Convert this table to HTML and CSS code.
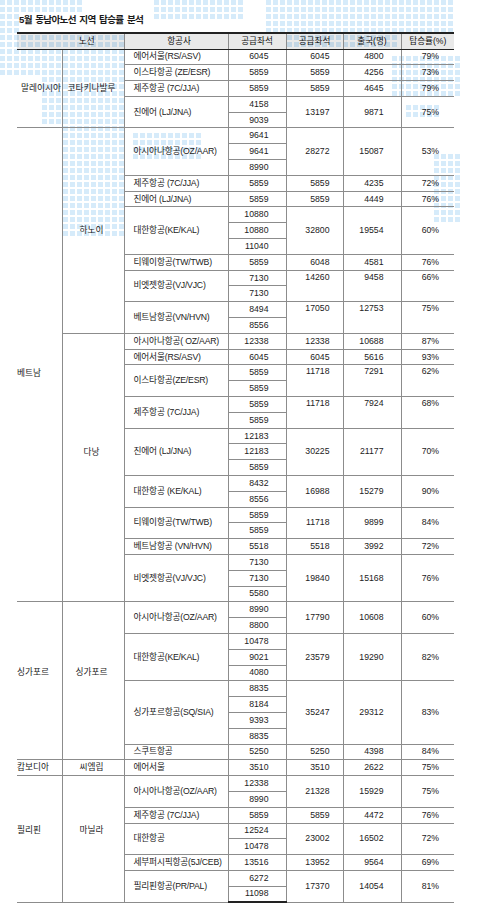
FILE: index.html
```html
<!DOCTYPE html>
<html lang="ko">
<head>
<meta charset="utf-8">
<title>5월 동남아노선 지역 탑승률 분석</title>
<link rel="stylesheet" href="styles.css">
</head>
<body>
<div class="page">
  <svg class="map" width="484" height="260" viewBox="0 0 484 260" aria-hidden="true">
    <defs>
      <pattern id="dots" width="7" height="7" patternUnits="userSpaceOnUse">
        <rect width="5" height="5" fill="#d6ebfa"/>
      </pattern>
    </defs>
    <g fill="url(#dots)">
      <rect x="0" y="0" width="84" height="14"/>
      <rect x="154" y="0" width="91" height="21"/>
      <rect x="266" y="0" width="189" height="35"/>
      <rect x="0" y="14" width="21" height="21"/>
      <rect x="0" y="35" width="126" height="42"/>
      <rect x="42" y="77" width="84" height="49"/>
      <rect x="63" y="126" width="63" height="112"/>
      <rect x="133" y="133" width="70" height="28"/>
      <rect x="287" y="35" width="112" height="14"/>
      <rect x="392" y="56" width="70" height="42"/>
      <rect x="406" y="105" width="35" height="14"/>
      <rect x="434" y="154" width="28" height="70"/>
    </g>
  </svg>

  <h1 class="title">5월 동남아노선 지역 탑승률 분석</h1>

  <table class="stats">
    <colgroup>
      <col class="c-country">
      <col class="c-city">
      <col class="c-air">
      <col class="c-sub">
      <col class="c-tot">
      <col class="c-out">
      <col class="c-rate">
    </colgroup>
    <thead>
      <tr>
        <th colspan="2" class="h-route">노선</th>
        <th class="h-air">항공사</th>
        <th>공급좌석</th>
        <th>공급좌석</th>
        <th>출국(명)</th>
        <th>탑승률(%)</th>
      </tr>
    </thead>
    <tbody>
      <!-- 말레이시아 -->
      <tr>
        <td rowspan="5" class="country country-my">말레이시아</td>
        <td rowspan="5" class="city">코타키나발루</td>
        <td class="nm">에어서울(RS/ASV)</td><td class="sub">6045</td><td class="tot">6045</td><td class="out">4800</td><td class="rate">79%</td>
      </tr>
      <tr><td class="nm">이스타항공 (ZE/ESR)</td><td class="sub">5859</td><td class="tot">5859</td><td class="out">4256</td><td class="rate">73%</td></tr>
      <tr><td class="nm">제주항공 (7C/JJA)</td><td class="sub">5859</td><td class="tot">5859</td><td class="out">4645</td><td class="rate">79%</td></tr>
      <tr><td rowspan="2" class="nm">진에어 (LJ/JNA)</td><td class="sub">4158</td><td rowspan="2" class="tot">13197</td><td rowspan="2" class="out">9871</td><td rowspan="2" class="rate">75%</td></tr>
      <tr><td class="sub">9039</td></tr>

      <!-- 베트남 / 하노이 -->
      <tr>
        <td rowspan="30" class="country country-vn">베트남</td>
        <td rowspan="13" class="city">하노이</td>
        <td rowspan="3" class="nm">아시아나항공(OZ/AAR)</td><td class="sub">9641</td><td rowspan="3" class="tot">28272</td><td rowspan="3" class="out">15087</td><td rowspan="3" class="rate">53%</td>
      </tr>
      <tr><td class="sub">9641</td></tr>
      <tr><td class="sub">8990</td></tr>
      <tr><td class="nm">제주항공 (7C/JJA)</td><td class="sub">5859</td><td class="tot">5859</td><td class="out">4235</td><td class="rate">72%</td></tr>
      <tr><td class="nm">진에어 (LJ/JNA)</td><td class="sub">5859</td><td class="tot">5859</td><td class="out">4449</td><td class="rate">76%</td></tr>
      <tr><td rowspan="3" class="nm">대한항공(KE/KAL)</td><td class="sub">10880</td><td rowspan="3" class="tot">32800</td><td rowspan="3" class="out">19554</td><td rowspan="3" class="rate">60%</td></tr>
      <tr><td class="sub">10880</td></tr>
      <tr><td class="sub">11040</td></tr>
      <tr><td class="nm">티웨이항공(TW/TWB)</td><td class="sub">5859</td><td class="tot">6048</td><td class="out">4581</td><td class="rate">76%</td></tr>
      <tr><td rowspan="2" class="nm">비엣젯항공(VJ/VJC)</td><td class="sub">7130</td><td rowspan="2" class="tot top">14260</td><td rowspan="2" class="out top">9458</td><td rowspan="2" class="rate top">66%</td></tr>
      <tr><td class="sub">7130</td></tr>
      <tr><td rowspan="2" class="nm">베트남항공(VN/HVN)</td><td class="sub">8494</td><td rowspan="2" class="tot top">17050</td><td rowspan="2" class="out top">12753</td><td rowspan="2" class="rate top">75%</td></tr>
      <tr><td class="sub">8556</td></tr>

      <!-- 베트남 / 다낭 -->
      <tr>
        <td rowspan="17" class="city city-dn">다낭</td>
        <td class="nm">아시아나항공( OZ/AAR)</td><td class="sub">12338</td><td class="tot">12338</td><td class="out">10688</td><td class="rate">87%</td>
      </tr>
      <tr><td class="nm">에어서울(RS/ASV)</td><td class="sub">6045</td><td class="tot">6045</td><td class="out">5616</td><td class="rate">93%</td></tr>
      <tr><td rowspan="2" class="nm">이스타항공(ZE/ESR)</td><td class="sub">5859</td><td rowspan="2" class="tot top">11718</td><td rowspan="2" class="out top">7291</td><td rowspan="2" class="rate top">62%</td></tr>
      <tr><td class="sub">5859</td></tr>
      <tr><td rowspan="2" class="nm">제주항공 (7C/JJA)</td><td class="sub">5859</td><td rowspan="2" class="tot top">11718</td><td rowspan="2" class="out top">7924</td><td rowspan="2" class="rate top">68%</td></tr>
      <tr><td class="sub">5859</td></tr>
      <tr><td rowspan="3" class="nm">진에어 (LJ/JNA)</td><td class="sub">12183</td><td rowspan="3" class="tot">30225</td><td rowspan="3" class="out">21177</td><td rowspan="3" class="rate">70%</td></tr>
      <tr><td class="sub">12183</td></tr>
      <tr><td class="sub">5859</td></tr>
      <tr><td rowspan="2" class="nm">대한항공 (KE/KAL)</td><td class="sub">8432</td><td rowspan="2" class="tot">16988</td><td rowspan="2" class="out">15279</td><td rowspan="2" class="rate">90%</td></tr>
      <tr><td class="sub">8556</td></tr>
      <tr><td rowspan="2" class="nm">티웨이항공(TW/TWB)</td><td class="sub">5859</td><td rowspan="2" class="tot">11718</td><td rowspan="2" class="out">9899</td><td rowspan="2" class="rate">84%</td></tr>
      <tr><td class="sub">5859</td></tr>
      <tr><td class="nm">베트남항공 (VN/HVN)</td><td class="sub">5518</td><td class="tot">5518</td><td class="out">3992</td><td class="rate">72%</td></tr>
      <tr><td rowspan="3" class="nm">비엣젯항공(VJ/VJC)</td><td class="sub">7130</td><td rowspan="3" class="tot">19840</td><td rowspan="3" class="out">15168</td><td rowspan="3" class="rate">76%</td></tr>
      <tr><td class="sub">7130</td></tr>
      <tr><td class="sub">5580</td></tr>

      <!-- 싱가포르 -->
      <tr>
        <td rowspan="10" class="country country-lift">싱가포르</td>
        <td rowspan="10" class="city city-lift">싱가포르</td>
        <td rowspan="2" class="nm">아시아나항공(OZ/AAR)</td><td class="sub">8990</td><td rowspan="2" class="tot">17790</td><td rowspan="2" class="out">10608</td><td rowspan="2" class="rate">60%</td>
      </tr>
      <tr><td class="sub">8800</td></tr>
      <tr><td rowspan="3" class="nm">대한항공(KE/KAL)</td><td class="sub">10478</td><td rowspan="3" class="tot">23579</td><td rowspan="3" class="out">19290</td><td rowspan="3" class="rate">82%</td></tr>
      <tr><td class="sub">9021</td></tr>
      <tr><td class="sub">4080</td></tr>
      <tr><td rowspan="4" class="nm">싱가포르항공(SQ/SIA)</td><td class="sub">8835</td><td rowspan="4" class="tot">35247</td><td rowspan="4" class="out">29312</td><td rowspan="4" class="rate">83%</td></tr>
      <tr><td class="sub">8184</td></tr>
      <tr><td class="sub">9393</td></tr>
      <tr><td class="sub">8835</td></tr>
      <tr><td class="nm">스쿠트항공</td><td class="sub">5250</td><td class="tot">5250</td><td class="out">4398</td><td class="rate">84%</td></tr>

      <!-- 캄보디아 -->
      <tr>
        <td class="country">캄보디아</td>
        <td class="city">씨엠립</td>
        <td class="nm">에어서울</td><td class="sub">3510</td><td class="tot">3510</td><td class="out">2622</td><td class="rate">75%</td>
      </tr>

      <!-- 필리핀 -->
      <tr>
        <td rowspan="8" class="country country-lift">필리핀</td>
        <td rowspan="8" class="city city-lift">마닐라</td>
        <td rowspan="2" class="nm">아시아나항공(OZ/AAR)</td><td class="sub">12338</td><td rowspan="2" class="tot">21328</td><td rowspan="2" class="out">15929</td><td rowspan="2" class="rate">75%</td>
      </tr>
      <tr><td class="sub">8990</td></tr>
      <tr><td class="nm">제주항공 (7C/JJA)</td><td class="sub">5859</td><td class="tot">5859</td><td class="out">4472</td><td class="rate">76%</td></tr>
      <tr><td rowspan="2" class="nm">대한항공</td><td class="sub">12524</td><td rowspan="2" class="tot">23002</td><td rowspan="2" class="out">16502</td><td rowspan="2" class="rate">72%</td></tr>
      <tr><td class="sub">10478</td></tr>
      <tr><td class="nm">세부퍼시픽항공(5J/CEB)</td><td class="sub">13516</td><td class="tot">13952</td><td class="out">9564</td><td class="rate">69%</td></tr>
      <tr><td rowspan="2" class="nm">필리핀항공(PR/PAL)</td><td class="sub">6272</td><td rowspan="2" class="tot">17370</td><td rowspan="2" class="out">14054</td><td rowspan="2" class="rate">81%</td></tr>
      <tr><td class="sub">11098</td></tr>
    </tbody>
  </table>
</div>
</body>
</html>
```

FILE: styles.css
```css
html, body {
  margin: 0;
  padding: 0;
  background: #ffffff;
}

.page {
  position: relative;
  width: 484px;
  height: 908px;
  box-sizing: border-box;
  padding: 13px 0 0 17px;
  font-family: "Liberation Sans", "Noto Sans CJK KR", sans-serif;
  color: #222222;
  overflow: hidden;
}

.map {
  position: absolute;
  left: 0;
  top: 0;
  z-index: 0;
}

.title {
  position: relative;
  z-index: 1;
  margin: 0 0 5px 2px;
  font-size: 9.6px;
  line-height: 14px;
  font-weight: bold;
  letter-spacing: -0.7px;
  word-spacing: 1.5px;
  color: #1a1a1a;
}

.stats {
  position: relative;
  z-index: 1;
  width: 437px;
  table-layout: fixed;
  border-collapse: collapse;
  font-size: 8.7px;
}

.c-country { width: 45px; }
.c-city { width: 62px; }
.c-air { width: 104px; }
.c-sub { width: 58px; }
.c-tot { width: 57px; }
.c-out { width: 58px; }
.c-rate { width: 53px; }

.stats thead tr {
  height: 16px;
}

.stats th {
  padding: 0;
  font-weight: normal;
  font-size: 8.6px;
  line-height: 13px;
  text-align: center;
  color: #111111;
  background: rgba(0, 0, 0, 0.085);
  border-top: 2px solid #222222;
  border-bottom: 1px solid #222222;
  border-left: 1px solid #8c8c8c;
  border-right: 1px solid #8c8c8c;
}

.stats th:first-child { border-left: none; }
.stats th:last-child { border-right: none; }

.stats th.h-route {
  padding-left: 33px;
}

.stats th.h-air {
  padding-left: 6px;
}

.stats tbody tr {
  height: 15.8px;
}

.stats td {
  padding: 0;
  line-height: 13px;
  border: 1px solid #8c8c8c;
  vertical-align: middle;
  white-space: nowrap;
}

.stats tbody tr:last-child td {
  border-bottom: 2px solid #222222;
}

.stats td.country {
  border-left: none;
  text-align: left;
  padding-left: 0;
}

.stats td.country-my {
  padding-left: 4px;
}

.stats td.country-vn {
  padding-top: 18px;
}

.stats td.country-lift {
  padding-bottom: 16px;
}

.stats td.city {
  text-align: center;
  padding-right: 3px;
}

.stats td.city-dn {
  padding-bottom: 30px;
}

.stats td.city-lift {
  padding-bottom: 16px;
}

.stats td.nm {
  text-align: left;
  padding-left: 9px;
  letter-spacing: -0.2px;
}

.stats td.sub {
  text-align: right;
  padding-right: 17px;
}

.stats td.tot {
  text-align: right;
  padding-right: 13px;
}

.stats td.out {
  text-align: right;
  padding-right: 17px;
}

.stats td.rate {
  text-align: right;
  padding-right: 15px;
  border-right: none;
}

.stats td.top {
  vertical-align: top;
}

.stats tbody tr:last-child td.country,
.stats tbody tr:last-child td.city {
  border-bottom: 2px solid #222222;
}
```
